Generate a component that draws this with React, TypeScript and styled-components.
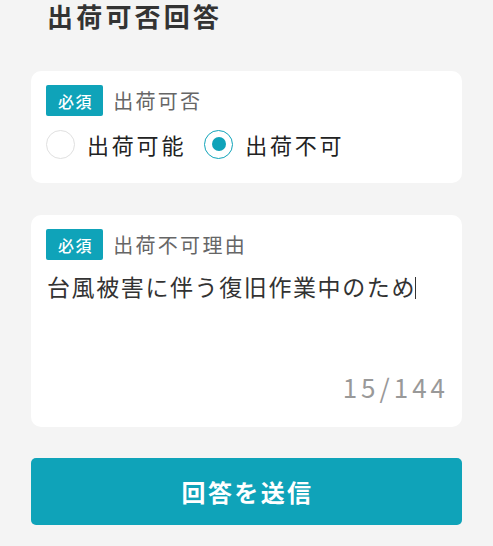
import React from "react";
import styled, { createGlobalStyle } from "styled-components";

const teal = "#0fa3b9";

const GlobalStyle = createGlobalStyle`
  html, body {
    margin: 0;
    padding: 0;
    background: #f4f4f4;
  }
  body {
    font-family: "Noto Sans CJK JP", "Noto Sans", sans-serif;
    letter-spacing: 0.1em;
  }
  * { box-sizing: border-box; }
`;

const Page = styled.div`
  padding: 0 31px 22px;
  display: flex;
  flex-direction: column;
`;

const Title = styled.h1`
  margin: 0 0 40px;
  padding: 1px 0 0 16px;
  font-size: 26px;
  line-height: 30px;
  font-weight: 700;
  letter-spacing: 3.2px;
  color: #333;
`;

const Card = styled.section<{ $gap?: number }>`
  background: #fff;
  border-radius: 10px;
  padding: 14px 15px 24px;
  margin-bottom: ${(p) => p.$gap ?? 32}px;
  display: flex;
  flex-direction: column;
`;

const FieldHeader = styled.div`
  display: flex;
  align-items: center;
  gap: 10px;
  height: 31px;
`;

const Badge = styled.span`
  display: inline-flex;
  align-items: center;
  height: 31px;
  padding: 0 10px 0 12px;
  background: ${teal};
  color: #fff;
  border-radius: 2px;
  font-size: 16px;
  font-weight: 500;
`;

const Label = styled.span`
  font-size: 20px;
  letter-spacing: 2.3px;
  color: #666;
`;

const RadioGroup = styled.div`
  display: flex;
  align-items: center;
  gap: 18px;
  margin-top: 13px;
  height: 30px;
`;

const RadioOption = styled.label`
  display: flex;
  align-items: center;
  gap: 12px;
  font-size: 22px;
  letter-spacing: 2.8px;
  color: #222;
`;

const RadioCircle = styled.span<{ $checked?: boolean }>`
  width: 29px;
  height: 29px;
  border-radius: 50%;
  border: ${(p) => (p.$checked ? `1.5px solid ${teal}` : "1.5px solid #e0e0e0")};
  display: flex;
  align-items: center;
  justify-content: center;
  &::after {
    content: "";
    display: ${(p) => (p.$checked ? "block" : "none")};
    width: 14px;
    height: 14px;
    border-radius: 50%;
    background: ${teal};
  }
`;

const TextBox = styled.div`
  margin-top: 10px;
  padding-left: 1px;
  height: 102px;
  font-size: 23px;
  line-height: 32px;
  color: #333;
`;

const Caret = styled.span`
  display: inline-block;
  width: 1px;
  height: 22px;
  background: #333;
  vertical-align: -3px;
  margin-left: -1px;
`;

const Counter = styled.div`
  align-self: flex-end;
  margin-right: -2px;
  font-size: 26px;
  line-height: 30px;
  letter-spacing: 4px;
  color: #999;
  margin-bottom: 1px;
`;

const SubmitButton = styled.button`
  height: 67px;
  border: none;
  border-radius: 5px;
  background: ${teal};
  color: #fff;
  font-family: "Noto Sans CJK JP", "Noto Sans", sans-serif;
  font-size: 24px;
  font-weight: 700;
  letter-spacing: 0.1em;
  padding: 0 0 0 2px;
`;

export default function App() {
  return (
    <>
      <GlobalStyle />
      <Page>
        <Title>出荷可否回答</Title>
        <Card>
          <FieldHeader>
            <Badge>必須</Badge>
            <Label>出荷可否</Label>
          </FieldHeader>
          <RadioGroup>
            <RadioOption>
              <RadioCircle />
              出荷可能
            </RadioOption>
            <RadioOption>
              <RadioCircle $checked />
              出荷不可
            </RadioOption>
          </RadioGroup>
        </Card>
        <Card $gap={31}>
          <FieldHeader>
            <Badge>必須</Badge>
            <Label>出荷不可理由</Label>
          </FieldHeader>
          <TextBox role="textbox">
            台風被害に伴う復旧作業中のため
            <Caret />
          </TextBox>
          <Counter>15/144</Counter>
        </Card>
        <SubmitButton type="button">回答を送信</SubmitButton>
      </Page>
    </>
  );
}
